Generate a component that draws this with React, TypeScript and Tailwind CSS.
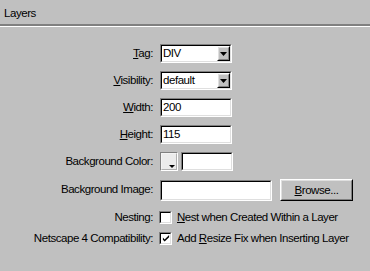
import type { ReactNode } from 'react'

const font = { fontFamily: '"Liberation Sans", Arial, sans-serif' }

// Win9x style sunken field border
function Sunken({ className = '', children }: { className?: string; children?: ReactNode }) {
  return (
    <div className={`border border-t-[#808080] border-l-[#808080] border-b-white border-r-white ${className}`}>
      <div className="h-full w-full border border-t-[#000] border-l-[#000] border-b-[#dfdfdf] border-r-[#dfdfdf] bg-white flex items-center">
        {children}
      </div>
    </div>
  )
}

function Raised({ className = '', children }: { className?: string; children?: ReactNode }) {
  return (
    <div className={`border border-t-white border-l-white border-b-black border-r-black ${className}`}>
      <div className="h-full w-full border border-t-[#dfdfdf] border-l-[#dfdfdf] border-b-[#808080] border-r-[#808080] bg-[#c0c0c0] flex items-center justify-center">
        {children}
      </div>
    </div>
  )
}

function Arrow() {
  return (
    <svg width="7" height="4" viewBox="0 0 7 4">
      <path d="M0 0h7L3.5 4z" fill="#000" />
    </svg>
  )
}

function Select({ value }: { value: string }) {
  return (
    <Sunken className="w-[72px] h-[19px]">
      <span className="flex-1 pl-[1px] leading-[13px]">{value}</span>
      <Raised className="w-[13px] h-[15px]">
        <Arrow />
      </Raised>
    </Sunken>
  )
}

function TextBox({ value = '', w = 'w-[72px]', h = 'h-[19px]' }: { value?: string; w?: string; h?: string }) {
  return (
    <Sunken className={`${w} ${h}`}>
      <span className="pl-[1px] leading-[13px]">{value}</span>
    </Sunken>
  )
}

function Check({ checked }: { checked?: boolean }) {
  return (
    <Sunken className="w-[13px] h-[13px]">
      {checked && (
        <svg width="9" height="9" viewBox="0 0 9 9" className="ml-[1px]">
          <path d="M1 3.5l2 2L8 0.5v2.5l-5 5-2-2z" fill="#000" />
        </svg>
      )}
    </Sunken>
  )
}

function Row({ label, children, className = '' }: { label: ReactNode; children: ReactNode; className?: string }) {
  return (
    <div className={`flex items-center ${className}`}>
      <div className="w-[153px] text-right whitespace-nowrap">{label}</div>
      <div className="ml-[7px] flex items-center">{children}</div>
    </div>
  )
}

export default function App() {
  return (
    <div
      className="w-[370px] h-[271px] bg-[#c0c0c0] text-black text-[11.5px] tracking-[-0.45px] overflow-hidden"
      style={font}
    >
      <div className="h-[24px] pt-[7px] pl-[4px] leading-[13px]">Layers</div>
      <div className="h-[2px] bg-[#808080]" />
      <div className="h-[1px] bg-white" />

      <div className="mt-[17px] flex flex-col">
        <Row label={<><u>T</u>ag:</>} className="h-[19px]">
          <Select value="DIV" />
        </Row>
        <Row label={<><u>V</u>isibility:</>} className="h-[19px] mt-[8px]">
          <Select value="default" />
        </Row>
        <Row label={<><u>W</u>idth:</>} className="h-[19px] mt-[8px]">
          <TextBox value="200" />
        </Row>
        <Row label={<><u>H</u>eight:</>} className="h-[19px] mt-[8px]">
          <TextBox value="115" />
        </Row>
        <Row label="Background Color:" className="h-[19px] mt-[8px]">
          <div className="relative w-[18px] h-[19px] border border-t-[#808080] border-l-[#808080] border-b-white border-r-white">
            <div className="h-full w-full bg-[#ececec] border border-t-[#f4f4f4] border-l-[#f4f4f4] border-b-[#b0b0b0] border-r-[#b0b0b0]" />
            <div className="absolute right-[2px] bottom-[2px] leading-none">
              <svg width="6" height="3" viewBox="0 0 6 3">
                <path d="M0 0h6L3 3z" fill="#000" />
              </svg>
            </div>
          </div>
          <div className="ml-[3px]">
            <TextBox w="w-[52px]" />
          </div>
        </Row>
        <Row label="Background Image:" className="h-[22px] mt-[8px]">
          <TextBox w="w-[112px]" h="h-[21px]" />
          <Raised className="ml-[8px] w-[73px] h-[22px]">
            <span className="leading-[13px]">
              <u>B</u>rowse...
            </span>
          </Raised>
        </Row>
        <Row label="Nesting:" className="h-[13px] mt-[10px]">
          <div className="-ml-[1px]">
            <Check />
          </div>
          <span className="ml-[5px] whitespace-nowrap">
            <u>N</u>est when Created Within a Layer
          </span>
        </Row>
        <Row label="Netscape 4 Compatibility:" className="h-[13px] mt-[8px]">
          <div className="-ml-[1px]">
            <Check checked />
          </div>
          <span className="ml-[5px] whitespace-nowrap">
            Add <u>R</u>esize Fix when Inserting Layer
          </span>
        </Row>
      </div>
    </div>
  )
}
